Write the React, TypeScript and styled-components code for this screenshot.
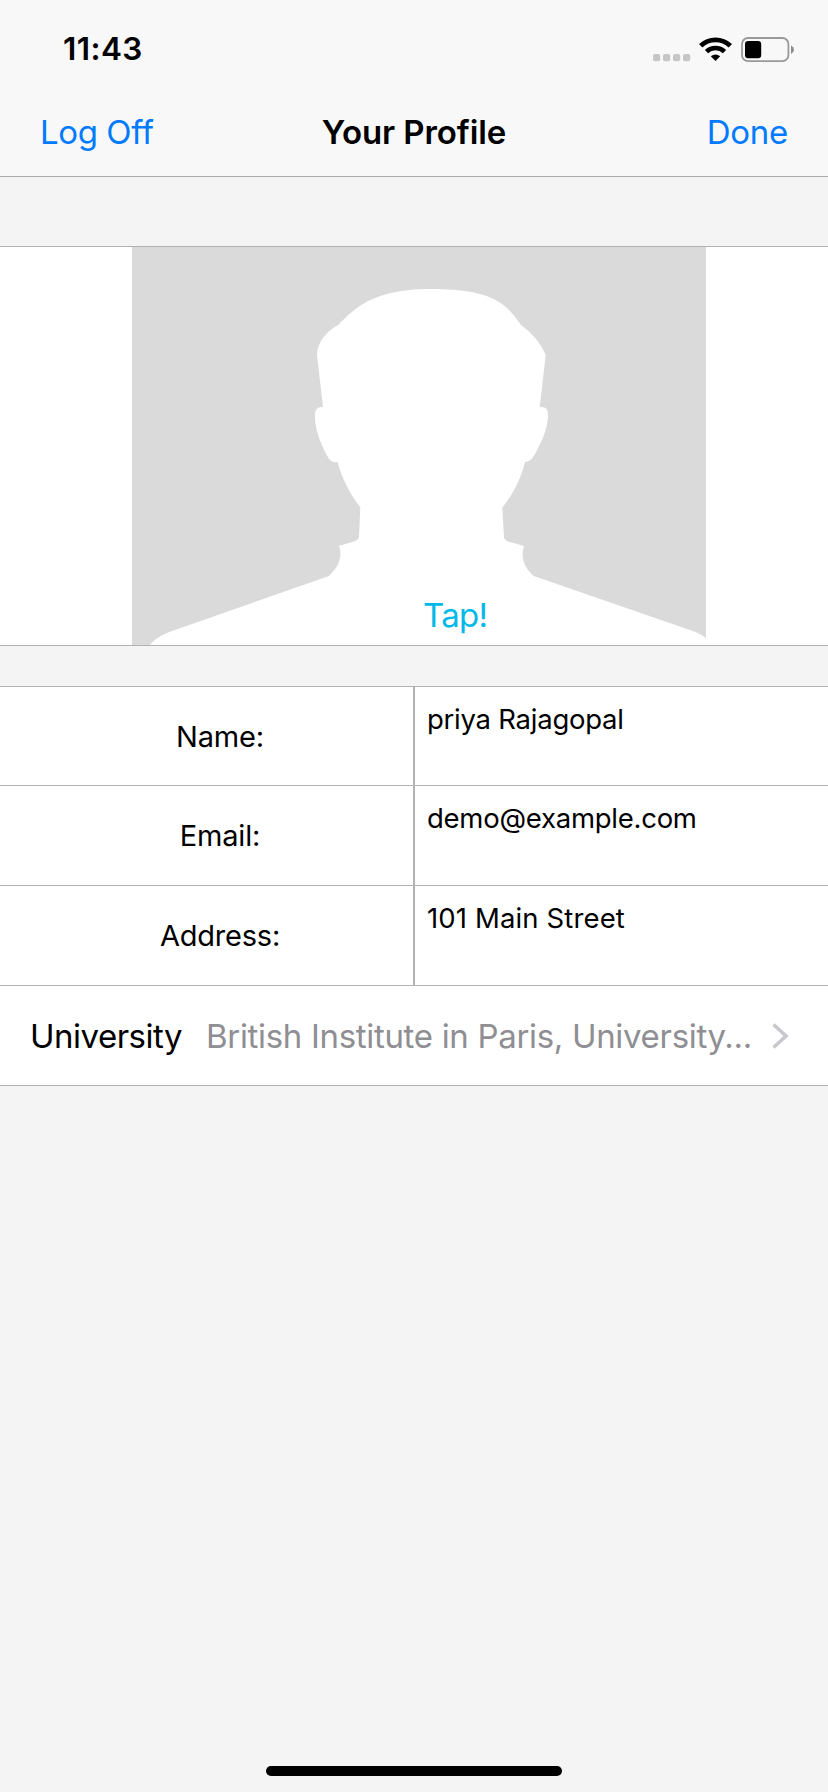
import React from "react";
import styled, { createGlobalStyle } from "styled-components";

const GlobalStyle = createGlobalStyle`
  *, *::before, *::after { box-sizing: border-box; }
  body { margin: 0; background: #f4f4f4; }
  button { font: inherit; background: none; border: 0; padding: 0; }
`;

const line = "#b2b2b2";

const Screen = styled.div`
  display: flex;
  flex-direction: column;
  width: 828px;
  height: 1792px;
  overflow: hidden;
  background: #f4f4f4;
  color: #000;
  font-family: Inter, "Liberation Sans", sans-serif;
`;

const Header = styled.header`
  height: 177px;
  background: #f8f8f8;
  border-bottom: 1px solid #acacac;
`;

const StatusBar = styled.div`
  display: flex;
  justify-content: space-between;
  align-items: center;
  height: 88px;
  padding: 12px 33px 0 63px;
`;

const Time = styled.span`
  margin-bottom: 2px;
  font-size: 31.5px;
  font-weight: 600;
  line-height: 38px;
  letter-spacing: 0.4px;
`;

const StatusIcons = styled.svg`
  display: block;
  width: 142px;
  height: 26px;
`;

const NavBar = styled.nav`
  display: grid;
  grid-template-columns: 1fr auto 1fr;
  align-items: center;
  height: 88px;
  padding: 0 40px;
`;

const NavButton = styled.button<{ $end?: boolean }>`
  justify-self: ${(p) => (p.$end ? "end" : "start")};
  color: #007aff;
  font-size: 33px;
  line-height: 40px;
  letter-spacing: ${(p) => (p.$end ? "-0.3px" : "-0.4px")};
`;

const Title = styled.h1`
  margin: 0;
  font-size: 33px;
  font-weight: 600;
  line-height: 40px;
  letter-spacing: -0.1px;
`;

const PhotoSection = styled.section`
  position: relative;
  display: flex;
  height: 400px;
  margin-top: 69px;
  padding-left: 132px;
  background: #fff;
  border-top: 1px solid ${line};
  border-bottom: 1px solid ${line};
`;

const Portrait = styled.svg`
  display: block;
  width: 574px;
  height: 398px;
`;

const TapButton = styled.button`
  position: absolute;
  left: 423px;
  top: 348px;
  color: #00b9e8;
  font-size: 33px;
  line-height: 40px;
  letter-spacing: -0.7px;
`;

const Form = styled.section`
  margin-top: 40px;
  border-top: 1px solid ${line};
  background: #fff;
`;

const Row = styled.div<{ $first?: boolean }>`
  display: flex;
  height: ${(p) => (p.$first ? 99 : 100)}px;
  border-bottom: 1px solid ${line};
`;

const Label = styled.div`
  display: flex;
  align-items: center;
  justify-content: center;
  width: 415px;
  padding-left: 27px;
  border-right: 2px solid ${line};
  font-size: 29px;
  letter-spacing: -0.2px;
`;

const Value = styled.div<{ $tracking: number }>`
  flex: 1;
  padding: 15px 0 0 12px;
  font-size: 27.5px;
  line-height: 34px;
  letter-spacing: ${(p) => p.$tracking}px;
`;

const LinkRow = styled.div`
  display: flex;
  align-items: center;
  height: 100px;
  padding: 0 39px 0 30px;
  border-bottom: 1px solid ${line};
  font-size: 33px;
  line-height: 40px;
`;

const LinkLabel = styled.span`
  width: 176px;
  letter-spacing: -0.5px;
`;

const LinkValue = styled.span`
  flex: 1;
  color: #8e8e93;
  white-space: nowrap;
  letter-spacing: -0.32px;
`;

const Chevron = styled.svg`
  display: block;
  width: 17px;
  height: 26px;
`;

const HomeIndicator = styled.div`
  width: 296px;
  height: 10px;
  margin: auto auto 16px;
  border-radius: 5px;
  background: #000;
`;

const fields = [
  { label: "Name:", value: "priya Rajagopal", tracking: -0.25 },
  { label: "Email:", value: "demo@example.com", tracking: -0.25 },
  { label: "Address:", value: "101 Main Street", tracking: 0.13 },
];

export default function App() {
  return (
    <Screen>
      <GlobalStyle />
      <Header>
        <StatusBar>
          <Time>11:43</Time>
          <StatusIcons viewBox="0 0 142 26" aria-hidden="true">
            <g fill="#c6c6c6">
              {[0, 10, 20, 30].map((x) => (
                <rect key={x} x={x} y="17" width="7.2" height="7.2" rx="2" />
              ))}
            </g>
            <g fill="none" stroke="#000">
              <path d="M47.7 8.8 A21.3 21.3 0 0 1 77.3 8.8" strokeWidth="4.8" />
              <path d="M53.5 14.6 A13.1 13.1 0 0 1 71.5 14.6" strokeWidth="4.6" />
            </g>
            <path d="M62.5 24 L57.8 19.3 Q62.5 15.6 67.2 19.3 Z" />
            <rect x="89" y="1" width="46.4" height="23.2" rx="6" fill="none" stroke="#999" strokeWidth="1.8" />
            <rect x="92" y="4" width="16.2" height="17.2" rx="3.2" />
            <path d="M138 8.5 Q141 10 141 12.7 Q141 15.4 138 17 Z" fill="#8c8c8c" />
          </StatusIcons>
        </StatusBar>
        <NavBar>
          <NavButton>Log Off</NavButton>
          <Title>Your Profile</Title>
          <NavButton $end>Done</NavButton>
        </NavBar>
      </Header>
      <PhotoSection>
        <Portrait viewBox="0 0 574 398" aria-hidden="true">
          <rect width="574" height="398" fill="#dadada" />
          <path
            fill="#fff"
            d="M18 398 C22 393 27 389 38 384.7 L118 356.7 L197 329 C206 320 209 313 208.3 304 Q208 301 206.7 299
              L222 294.5 Q227 292.5 227 290 L228.3 260.3 C218 247 210 232 205.7 215
              C200 216 197.5 213 194.7 208 C188 195 182.5 181 183 168 Q183 159 191 160
              L185 108 C185 95 195 84 207 77.3 C220 65 237 42 298 42
              C360 42 374 56 389 78 Q406 90 413.7 107.7 L407.7 160.3
              Q415.7 159 416 167 C416 180 411 192 406 201 Q400 215.5 393 215
              C389 232 381 247 370.3 260.7 L372 290 Q372 292.5 376 294.5 L392 299
              Q386.5 316 401.7 329 L563 384.7 Q569 387 574 391.3 V398 Z"
          />
        </Portrait>
        <TapButton>Tap!</TapButton>
      </PhotoSection>
      <Form>
        {fields.map((field, i) => (
          <Row key={field.label} $first={i === 0}>
            <Label>{field.label}</Label>
            <Value $tracking={field.tracking}>{field.value}</Value>
          </Row>
        ))}
        <LinkRow>
          <LinkLabel>University</LinkLabel>
          <LinkValue>British Institute in Paris, University...</LinkValue>
          <Chevron viewBox="0 0 17 26" aria-hidden="true">
            <path d="M1.5 1.5 L14 13 L1.5 24.5" fill="none" stroke="#c7c7cc" strokeWidth="3.6" />
          </Chevron>
        </LinkRow>
      </Form>
      <HomeIndicator />
    </Screen>
  );
}
